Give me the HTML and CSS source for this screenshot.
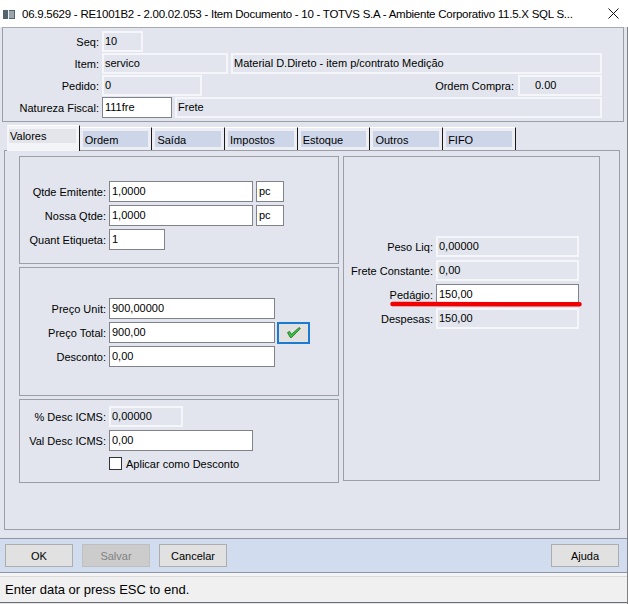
FILE: index.html
```html
<!DOCTYPE html>
<html lang="pt">

<head>
    <meta charset="utf-8">
    <meta name="viewport" content="width=device-width, initial-scale=1.0">
    <title>Item Documento</title>

    <link rel="stylesheet" href="styles.css">
</head>

<body>
    <header class="titlebar">
        <svg class="appicon" viewBox="0 0 12 9">
            <rect x="0" y="0" width="12" height="9" fill="#53646c" />
            <rect x="6" y="1" width="5" height="7" fill="#9aa6ac" />
            <rect x="5" y="0" width="1" height="9" fill="#e9eef0" />
        </svg>
        <span class="title">06.9.5629 - RE1001B2 - 2.00.02.053 - Item Documento - 10 - TOTVS S.A - Ambiente Corporativo 11.5.X SQL S...</span>
        <svg class="close" viewBox="0 0 11 11">
            <path d="M0.5 0.5 L10.5 10.5 M10.5 0.5 L0.5 10.5" stroke="#111" stroke-width="1" fill="none" />
        </svg>
    </header>

    <div class="window">
        <section class="head">
            <div class="row">
                <span class="lbl">Seq:</span>
                <span class="fld ro w-seq">10</span>
            </div>
            <div class="row">
                <span class="lbl">Item:</span>
                <span class="fld ro w-item">servico</span>
                <span class="fld ro grow gap3">Material D.Direto - item p/contrato Medição</span>
            </div>
            <div class="row">
                <span class="lbl">Pedido:</span>
                <span class="fld ro w-ped">0</span>
                <span class="lbl grow">Ordem Compra:</span>
                <span class="fld ro w-oc">0.00</span>
            </div>
            <div class="row">
                <span class="lbl">Natureza Fiscal:</span>
                <span class="fld w-nat">111fre</span>
                <span class="fld ro grow gap3">Frete</span>
            </div>
        </section>

        <nav class="tabs">
            <div class="tab on"><span>Valores</span></div>
            <div class="tab"><span>Ordem</span></div>
            <div class="tab"><span>Saída</span></div>
            <div class="tab"><span>Impostos</span></div>
            <div class="tab"><span>Estoque</span></div>
            <div class="tab"><span>Outros</span></div>
            <div class="tab"><span>FIFO</span></div>
        </nav>

        <section class="frame">
            <div class="col">
                <div class="box box-qtd">
                    <div class="row">
                        <span class="lbl">Qtde Emitente:</span>
                        <span class="fld w-144">1,0000</span>
                        <span class="fld w-un gap3">pc</span>
                    </div>
                    <div class="row">
                        <span class="lbl">Nossa Qtde:</span>
                        <span class="fld w-144">1,0000</span>
                        <span class="fld w-un gap3">pc</span>
                    </div>
                    <div class="row">
                        <span class="lbl">Quant Etiqueta:</span>
                        <span class="fld w-etq">1</span>
                    </div>
                </div>

                <div class="box box-preco">
                    <div class="row">
                        <span class="lbl">Preço Unit:</span>
                        <span class="fld w-166">900,00000</span>
                    </div>
                    <div class="row">
                        <span class="lbl">Preço Total:</span>
                        <span class="fld w-166">900,00</span>
                        <button class="ok-btn">
                            <svg viewBox="0 0 14 11">
                                <path d="M0.5 5.6 L2.6 4.4 L4.4 7.4 L12.2 0.5 L13.4 1.5 L4.6 10.5 L3.3 10.5 Z" fill="#36c43c" stroke="#1d6b22" stroke-width="0.8" stroke-linejoin="round" />
                            </svg>
                        </button>
                    </div>
                    <div class="row">
                        <span class="lbl">Desconto:</span>
                        <span class="fld w-166">0,00</span>
                    </div>
                </div>

                <div class="box box-icms">
                    <div class="row">
                        <span class="lbl">% Desc ICMS:</span>
                        <span class="fld ro w-pct">0,00000</span>
                    </div>
                    <div class="row">
                        <span class="lbl">Val Desc ICMS:</span>
                        <span class="fld w-144">0,00</span>
                    </div>
                    <label class="check">
                        <span class="box-mark"></span>
                        Aplicar como Desconto
                    </label>
                </div>
            </div>

            <div class="box box-frete">
                <div class="row">
                    <span class="lbl">Peso Liq:</span>
                    <span class="fld ro w-143">0,00000</span>
                </div>
                <div class="row">
                    <span class="lbl">Frete Constante:</span>
                    <span class="fld ro w-143">0,00</span>
                </div>
                <div class="row">
                    <span class="lbl">Pedágio:</span>
                    <span class="fld w-143">150,00</span>
                </div>
                <div class="row">
                    <span class="lbl">Despesas:</span>
                    <span class="fld ro w-143">150,00</span>
                </div>
                <!-- risco vermelho sob o pedágio -->
                <svg class="mark" viewBox="0 0 192 6">
                    <path d="M2.5 3 L189.5 3.3" stroke="#f00000" stroke-width="4.5" stroke-linecap="round" />
                </svg>
            </div>
        </section>

        <div class="buttons">
            <button class="btn">OK</button>
            <button class="btn off">Salvar</button>
            <button class="btn">Cancelar</button>
            <button class="btn help">Ajuda</button>
        </div>

        <footer class="status">Enter data or press ESC to end.</footer>
    </div>
</body>

</html>
```

FILE: styles.css
```css
* {
    box-sizing: border-box;
}

body {
    margin: 0;
    width: 628px;
    height: 604px;
    overflow: hidden;
    background: #fff;
    font-family: "Liberation Sans", Arial, sans-serif;
    font-size: 11px;
    color: #000;
}

/* barra de titulo */
.titlebar {
    height: 27px;
    display: flex;
    align-items: center;
    background: #fff;
    padding-left: 3px;
}

.appicon {
    width: 12px;
    height: 9px;
    margin-right: 7px;
    margin-top: 1px;
}

.title {
    flex: 1;
    font-size: 11.5px;
    letter-spacing: -0.25px;
    white-space: nowrap;
    overflow: hidden;
}

.close {
    width: 11px;
    height: 11px;
    margin: 0 9px 0 8px;
}

.window {
    height: 577px;
    background: #e2e5ed;
    border-right: 1px solid #808080;
    display: flex;
    flex-direction: column;
}

/* campos */
.row {
    display: flex;
    align-items: center;
    height: 21px;
}

.lbl {
    text-align: right;
    margin-right: 3px;
    white-space: nowrap;
}

.fld {
    height: 21px;
    line-height: 19px;
    padding: 0 2px;
    border: 1px solid #80848a;
    background: #fff;
    white-space: nowrap;
    overflow: hidden;
}

.fld.ro {
    background: #e2e5ed;
    border: 2px solid #f5f6f9;
    line-height: 17px;
    padding-left: 1px;
}

.grow {
    flex: 1;
}

.gap3 {
    margin-left: 3px;
}

/* cabecalho */
.head {
    margin: 0 3px 0 2px;
    height: 95px;
    border: 1px solid #9a9ea6;
    border-top-color: #a6aab2;
    padding: 3px 21px 0 0;
    display: flex;
    flex-direction: column;
    gap: 1px;
}

.head .lbl {
    width: 96px;
}

.head .lbl.grow {
    width: auto;
    margin-right: 4px;
}

.w-seq { width: 41px; }
.w-item { width: 126px; }
.w-ped { width: 100px; }
.fld.w-oc { width: 84px; padding-left: 15px; }
.w-nat { width: 70px; }

/* abas */
.tabs {
    display: flex;
    align-items: flex-end;
    height: 28px;
    margin-left: 7px;
    position: relative;
    z-index: 1;
}

.tab {
    flex: 0 0 72.7px;
    height: 23px;
    border-top: 1px solid #fff;
    border-right: 1px solid #1a1a1a;
    background: #eceef3;
    padding: 3px 3px 2px 3px;
}

.tab span {
    display: block;
    height: 16px;
    line-height: 18px;
    padding-left: 2px;
    background: #cdd6e9;
}

.tab.on {
    height: 26px;
    margin-bottom: -1px;
    background: #f3f4f7;
    padding: 3px 3px 7px 2px;
}

.tab.on span {
    height: 14px;
    line-height: 14px;
    padding-left: 1px;
    background: #e3e5eb;
}

.frame {
    margin: 0 7px 0 4px;
    height: 380px;
    border: 1px solid #9a9ea6;
    display: flex;
    gap: 4px;
    padding: 5px 0 0 14px;
}

.col {
    width: 320px;
    display: flex;
    flex-direction: column;
    gap: 3px;
}

.box {
    border: 1px solid #9a9ea6;
    display: flex;
    flex-direction: column;
    gap: 3px;
}

.col .lbl {
    width: 86px;
}

.box-qtd {
    height: 108px;
    padding-top: 24px;
}

.box-preco {
    height: 129px;
    padding-top: 30px;
}

.box-icms {
    height: 84px;
    padding-top: 6px;
}

.w-144 { width: 144px; }
.w-un { width: 28px; }
.w-etq { width: 56px; }
.w-166 { width: 166px; }
.w-pct { width: 74px; }
.w-143 { width: 143px; }

.ok-btn {
    width: 33px;
    height: 22px;
    margin-left: 2px;
    padding: 0;
    border: 2px solid #1b7bd3;
    background: #e1e1e1;
    display: flex;
    align-items: center;
    justify-content: center;
}

.ok-btn svg {
    width: 14px;
    height: 11px;
}

.check {
    display: flex;
    align-items: center;
    margin: 2px 0 0 89px;
    height: 15px;
}

.box-mark {
    width: 13px;
    height: 13px;
    border: 1px solid #333;
    background: #fff;
    margin-right: 4px;
}

.box-frete {
    width: 257px;
    height: 325px;
    padding-top: 79px;
    position: relative;
}

.box-frete .lbl {
    width: 89px;
}

.mark {
    position: absolute;
    left: 46px;
    top: 144px;
    width: 192px;
    height: 6px;
}

/* botoes */
.buttons {
    margin-top: 8px;
    height: 35px;
    background: #d1dcee;
    border-top: 1px solid #8d96a6;
    border-bottom: 1px solid #8d96a6;
    display: flex;
    gap: 9px;
    padding: 5px 8px 0 5px;
}

.btn {
    width: 68px;
    height: 23px;
    border: 1px solid #adadad;
    background: #e1e1e1;
    font-family: "Liberation Sans", Arial, sans-serif;
    font-size: 11px;
    color: #000;
    padding: 0;
}

.btn.off {
    background: #cccccc;
    border-color: #bfbfbf;
    color: #838383;
}

.btn.help {
    margin-left: auto;
}

.status {
    flex: 1;
    background: #f0f0f0;
    border-top: 3px solid #f4f4f4;
    box-shadow: inset 0 1px 0 #d9d9d9;
    border-bottom: 1px solid #6e6e6e;
    margin-bottom: 1px;
    padding: 2px 0 0 5px;
    font-size: 13px;
    line-height: 24px;
}
```
